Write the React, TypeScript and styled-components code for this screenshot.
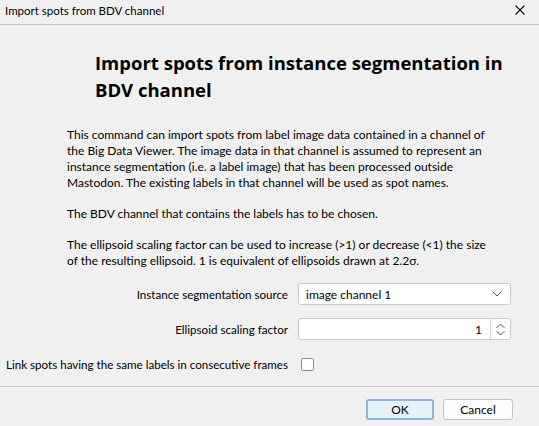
import React from "react";
import styled, { createGlobalStyle } from "styled-components";

const Global = createGlobalStyle`
  html, body { margin: 0; padding: 0; background: #f0f0f0; }
  body { font-family: "Lato", "Noto Sans", sans-serif; color: #000; }
`;

const Window = styled.div`
  width: 539px;
  height: 426px;
  background: #f0f0f0;
  display: flex;
  flex-direction: column;
  overflow: hidden;
`;

const TitleBar = styled.div`
  height: 24px;
  border-bottom: 1px solid #c6c6c6;
  display: flex;
  align-items: center;
  justify-content: space-between;
  padding: 0 14px 0 5px;
  box-sizing: content-box;
  font-size: 11.5px;
`;

const TitleText = styled.span`
  margin-top: -4px;
`;

const CloseIcon = styled.svg`
  width: 10px;
  height: 10px;
  margin-top: -4px;
`;

const Heading = styled.h1`
  margin: 24px 0 0 95px;
  font-family: "Open Sans", "Lato", sans-serif;
  font-size: 18.5px;
  line-height: 27px;
  font-weight: 700;
  white-space: nowrap;
`;

const Description = styled.div`
  margin: 24px 0 0 67px;
  font-size: 12px;
  line-height: 16px;
  display: flex;
  flex-direction: column;
  gap: 15px;
`;

const Para = styled.p`
  margin: 0;
  white-space: nowrap;
`;

const Form = styled.div`
  margin: 14px 0 0 5px;
  display: grid;
  grid-template-columns: 283px 213px;
  grid-auto-rows: 22px;
  column-gap: 10px;
  row-gap: 13px;
  align-items: center;
  font-size: 11.6px;
`;

const Label = styled.label`
  justify-self: end;
  text-align: right;
  white-space: nowrap;
`;

const Field = styled.div`
  height: 22px;
  box-sizing: border-box;
  background: #fff;
  border: 1px solid #c9c9c9;
  border-radius: 3px;
  display: flex;
  align-items: center;
  font-size: 12px;
`;

const FieldText = styled.span<{ $right?: boolean }>`
  flex: 1;
  padding: 0 ${(p) => (p.$right ? "8px" : "0")} 0 ${(p) => (p.$right ? "0" : "7px")};
  text-align: ${(p) => (p.$right ? "right" : "left")};
`;

const IconSlot = styled.div<{ $divider?: boolean }>`
  width: 19px;
  height: 100%;
  display: flex;
  align-items: center;
  justify-content: center;
  border-left: ${(p) => (p.$divider ? "1px solid #d4d4d4" : "none")};
  margin-right: ${(p) => (p.$divider ? "0" : "4px")};
`;

const Checkbox = styled.div`
  width: 13px;
  height: 13px;
  box-sizing: border-box;
  border: 1px solid #8a8a8a;
  border-radius: 2px;
  background: #fff;
  margin-left: 3px;
`;

const Footer = styled.div`
  margin-top: 11px;
  border-top: 1px solid #c6c6c6;
  padding: 12px 26px 0 0;
  display: flex;
  justify-content: flex-end;
  gap: 9px;
`;

const Button = styled.button<{ $primary?: boolean }>`
  height: 21px;
  width: ${(p) => (p.$primary ? "68px" : "70px")};
  font-family: inherit;
  font-size: 12px;
  color: #000;
  padding: 0;
  border-radius: 3px;
  box-sizing: border-box;
  background: ${(p) => (p.$primary ? "#e5f1fb" : "#fdfdfd")};
  border: ${(p) => (p.$primary ? "2px solid #8fb5dd" : "1px solid #c2c2c2")};
`;

export default function App() {
  return (
    <Window>
      <Global />
      <TitleBar>
        <TitleText>Import spots from BDV channel</TitleText>
        <CloseIcon viewBox="0 0 10 10">
          <path d="M0.5 0.5 L9.5 9.5 M9.5 0.5 L0.5 9.5" stroke="#111" strokeWidth="1.1" />
        </CloseIcon>
      </TitleBar>
      <Heading>
        Import spots from instance segmentation in
        <br />
        BDV channel
      </Heading>
      <Description>
        <Para>
          This command can import spots from label image data contained in a channel of
          <br />
          the Big Data Viewer. The image data in that channel is assumed to represent an
          <br />
          instance segmentation (i.e. a label image) that has been processed outside
          <br />
          Mastodon. The existing labels in that channel will be used as spot names.
        </Para>
        <Para>The BDV channel that contains the labels has to be chosen.</Para>
        <Para>
          The ellipsoid scaling factor can be used to increase (&gt;1) or decrease (&lt;1) the size
          <br />
          of the resulting ellipsoid. 1 is equivalent of ellipsoids drawn at 2.2σ.
        </Para>
      </Description>
      <Form>
        <Label>Instance segmentation source</Label>
        <Field>
          <FieldText>image channel 1</FieldText>
          <IconSlot>
            <svg width="10" height="6" viewBox="0 0 10 6">
              <path d="M0.5 0.5 L5 5 L9.5 0.5" fill="none" stroke="#555" strokeWidth="1" />
            </svg>
          </IconSlot>
        </Field>
        <Label>Ellipsoid scaling factor</Label>
        <Field>
          <FieldText $right>1</FieldText>
          <IconSlot $divider>
            <svg width="9" height="13" viewBox="0 0 9 13">
              <path d="M0.5 5 L4.5 1 L8.5 5 M0.5 8 L4.5 12 L8.5 8" fill="none" stroke="#555" strokeWidth="1" />
            </svg>
          </IconSlot>
        </Field>
        <Label>Link spots having the same labels in consecutive frames</Label>
        <Checkbox />
      </Form>
      <Footer>
        <Button $primary>OK</Button>
        <Button>Cancel</Button>
      </Footer>
    </Window>
  );
}
